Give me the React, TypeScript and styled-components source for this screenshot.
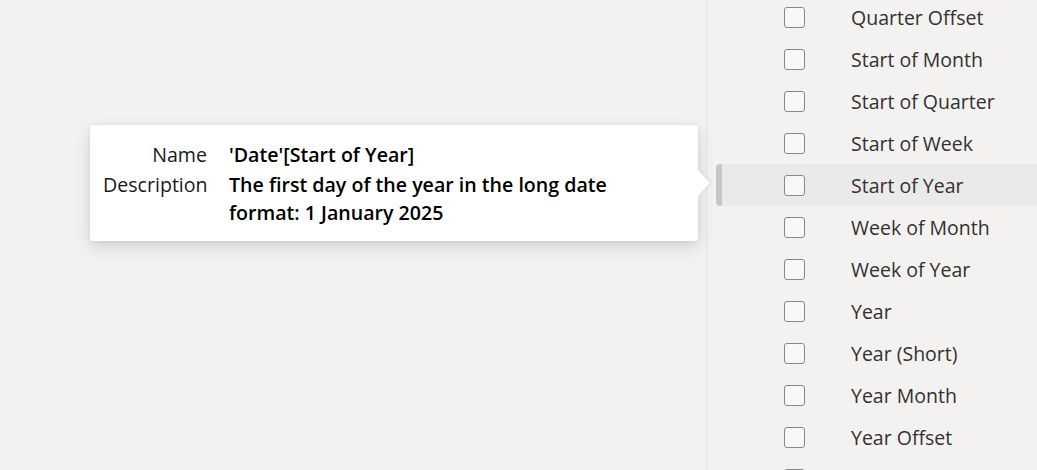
import React from 'react';
import styled, { createGlobalStyle } from 'styled-components';

const GlobalStyle = createGlobalStyle`
  html, body {
    margin: 0;
    padding: 0;
    background: #f3f2f1;
    font-family: "Open Sans", "Noto Sans", sans-serif;
  }
`;

// the last row is only peeking in at the bottom edge, its label is below the fold
const fields = [
    'Quarter Offset',
    'Start of Month',
    'Start of Quarter',
    'Start of Week',
    'Start of Year',
    'Week of Month',
    'Week of Year',
    'Year',
    'Year (Short)',
    'Year Month',
    'Year Offset',
    '',
];

const App = () => {
    return (
        <>
            <GlobalStyle/>
            <Page>
                <Canvas>
                    <Tooltip>
                        <Grid>
                            <Label>Name</Label>
                            <Value>'Date'[Start of Year]</Value>
                            <Label>Description</Label>
                            <Value>The first day of the year in the long date format: 1 January 2025</Value>
                        </Grid>
                        <Arrow/>
                    </Tooltip>
                </Canvas>
                <FieldPanel>
                    <FieldList>
                        {fields.map((name, i) => (
                            <FieldRow key={i} $active={name === 'Start of Year'}>
                                <Checkbox/>
                                {name && <FieldName>{name}</FieldName>}
                            </FieldRow>
                        ))}
                    </FieldList>
                </FieldPanel>
            </Page>
        </>
    );
};

export default App;

const Page = styled.div`
  display: flex;
  width: 1037px;
  height: 470px;
  overflow: hidden;
`

const Canvas = styled.div`
  position: relative;
  width: 706px;
  flex-shrink: 0;
`

const Tooltip = styled.div`
  position: absolute;
  left: 90px;
  top: 125px;
  width: 608px;
  height: 116px;
  box-sizing: border-box;
  padding: 16px 60px 0 13px;
  background: #ffffff;
  border-radius: 3px;
  box-shadow: 0 6px 18px rgba(0, 0, 0, 0.13), 0 1px 4px rgba(0, 0, 0, 0.08);
  z-index: 2;
`

const Arrow = styled.div`
  position: absolute;
  right: -12px;
  top: 45px;
  width: 0;
  height: 0;
  border-top: 13px solid transparent;
  border-bottom: 13px solid transparent;
  border-left: 12px solid #ffffff;
  filter: drop-shadow(2px 0 1px rgba(0, 0, 0, 0.05));
`

const Grid = styled.div`
  display: grid;
  grid-template-columns: 104px 1fr;
  column-gap: 22px;
  row-gap: 2px;
  font-size: 19.6px;
  line-height: 28px;
`

const Label = styled.div`
  text-align: right;
  color: #1b1a19;
  white-space: nowrap;
`

const Value = styled.div`
  color: #000000;
  font-weight: 600;
`

const FieldPanel = styled.div`
  flex: 1;
  border-left: 1px solid #e6e4e2;
  background: #f3f2f1;
`

const FieldList = styled.ul`
  list-style: none;
  margin: -4px 0 0 0;
  padding: 0;
`

const FieldRow = styled.li<{ $active?: boolean }>`
  position: relative;
  display: flex;
  align-items: center;
  height: 42px;
  margin-left: 9px;
  padding-left: 68px;
  border-radius: 4px 0 0 4px;
  background: ${p => p.$active ? '#eaeaea' : 'transparent'};

  &::before {
    content: "";
    display: ${p => p.$active ? 'block' : 'none'};
    position: absolute;
    left: 0;
    top: 0;
    bottom: 0;
    width: 6px;
    border-radius: 4px 0 0 4px;
    background: #c8c6c4;
  }
`

const Checkbox = styled.span`
  width: 19px;
  height: 19px;
  border: 1px solid #8a8886;
  border-radius: 3px;
  background: #f8f8f8;
  flex-shrink: 0;
`

const FieldName = styled.span`
  margin-left: 46px;
  font-size: 19.5px;
  color: #323130;
  white-space: nowrap;
`
